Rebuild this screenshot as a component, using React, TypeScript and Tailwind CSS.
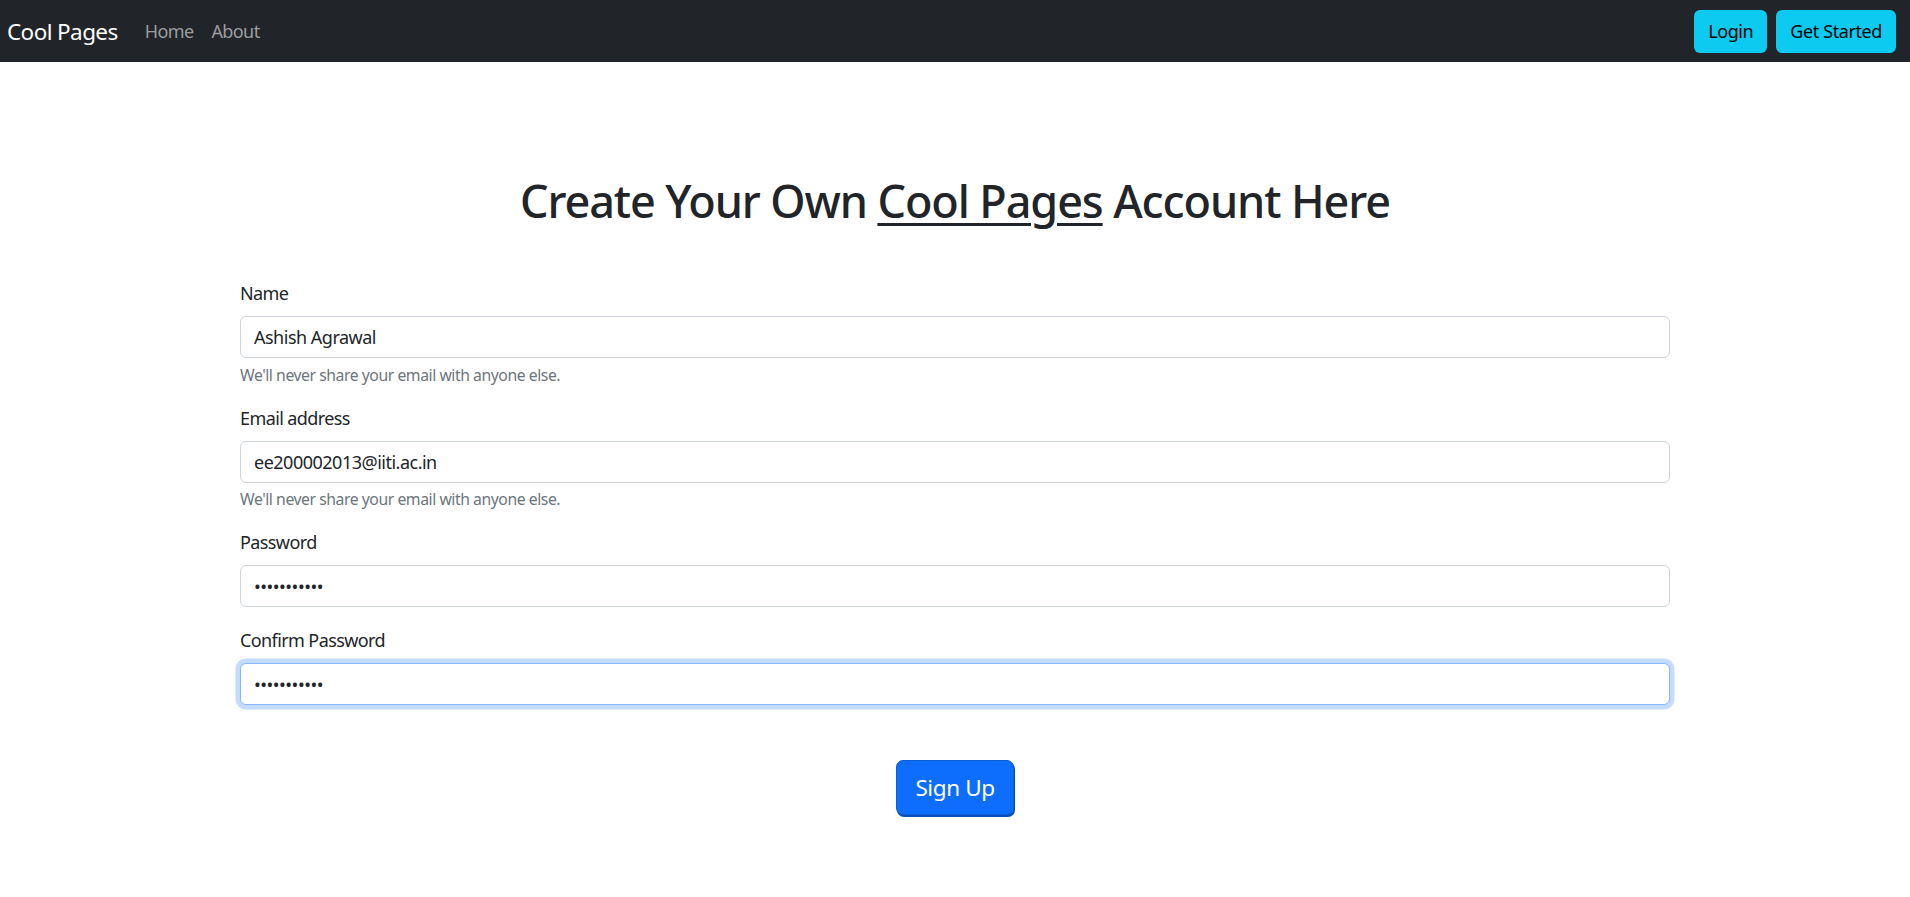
import React from "react";

const font = { fontFamily: '"Noto Sans", "Open Sans", sans-serif' };

function Field({
  label,
  value,
  type = "text",
  help,
  focused = false,
  mb = "mb-[18px]",
}: {
  label: string;
  value: string;
  type?: string;
  help?: string;
  focused?: boolean;
  mb?: string;
}) {
  return (
    <div className={mb + " flex flex-col"}>
      <label className="mb-[9px] text-[18px] leading-[27px] tracking-[-0.6px] text-[#212529]">
        {label}
      </label>
      <input
        type={type}
        defaultValue={value}
        readOnly
        className={
          "h-[42px] w-full rounded-[6px] border bg-white px-[13px] text-[18px] tracking-[-0.5px] text-[#212529] outline-none " +
          (focused
            ? "border-[#86b7fe] shadow-[0_0_0_4.5px_rgba(13,110,253,0.25)]"
            : "border-[#ced4da]")
        }
        style={font}
      />
      {help && (
        <div className="mt-[4.5px] text-[15.75px] leading-[24px] tracking-[-0.45px] text-[#6c757d]">
          {help}
        </div>
      )}
    </div>
  );
}

export default function App() {
  return (
    <div className="min-h-[897px] bg-white" style={font}>
      <nav className="flex h-[62px] items-center justify-between bg-[#212529] pl-[7px] pr-[14px]">
        <div className="flex items-center">
          <span className="mr-[18px] text-[22.5px] leading-[33px] tracking-[-0.6px] text-white">
            Cool Pages
          </span>
          <a className="px-[9px] text-[18px] leading-[27px] tracking-[-0.6px] text-[#9b9d9f]">Home</a>
          <a className="px-[9px] text-[18px] leading-[27px] tracking-[-0.6px] text-[#9b9d9f]">About</a>
        </div>
        <div className="flex items-center gap-[9px]">
          <button className="h-[43px] rounded-[6px] bg-[#0dcaf0] px-[14px] text-[18px] tracking-[-0.4px] text-black">
            Login
          </button>
          <button className="h-[43px] rounded-[6px] bg-[#0dcaf0] px-[14px] text-[18px] tracking-[-0.4px] text-black">
            Get Started
          </button>
        </div>
      </nav>

      <main className="mx-auto w-[1430px] pt-[112px]">
        <h1 className="text-center text-[45px] font-medium leading-[54px] tracking-[-1.1px] text-[#212529]">
          Create Your Own{" "}
          <u className="decoration-[3px] underline-offset-[5px]">Cool Pages</u> Account Here
        </h1>

        <form className="mt-[52px]">
          <Field
            label="Name"
            value="Ashish Agrawal"
            help="We'll never share your email with anyone else."
          />
          <Field
            label="Email address"
            value="ee200002013@iiti.ac.in"
            type="email"
            help="We'll never share your email with anyone else."
          />
          <Field label="Password" value="12345678901" type="password" mb="mb-[20px]" />
          <Field label="Confirm Password" value="12345678901" type="password" focused mb="mb-0" />

          <div className="mt-[55px] flex justify-center">
            <button
              type="button"
              className="h-[55px] w-[118px] rounded-[7px] border border-[#0b5ed7] bg-[#0d6efd] text-[22.5px] tracking-[-0.4px] text-white shadow-[1px_2px_0_#0a4fb5]"
            >
              Sign Up
            </button>
          </div>
        </form>
      </main>
    </div>
  );
}
